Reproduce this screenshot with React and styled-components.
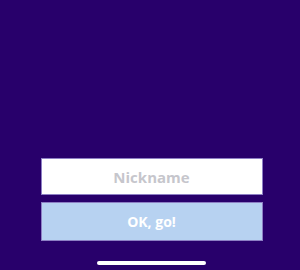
import React from 'react';
import styled, { createGlobalStyle } from 'styled-components';

const GlobalStyle = createGlobalStyle`
  html, body {
    margin: 0;
    padding: 0;
    background: #28006b;
  }
  #root {
    height: 270px;
  }
`;

const Screen = styled.main`
  box-sizing: border-box;
  height: 270px;
  width: 300px;
  padding-left: 3px;
  display: flex;
  flex-direction: column;
  justify-content: flex-end;
  align-items: center;
  background: #28006b;
  font-family: 'Open Sans', 'Liberation Sans', sans-serif;
`;

const Form = styled.form`
  width: 222px;
  display: flex;
  flex-direction: column;
  gap: 7px;
  margin-bottom: 20px;
`;

const Field = styled.input`
  box-sizing: border-box;
  width: 100%;
  height: 37px;
  border: 1px solid #8d7fc4;
  background: #ffffff;
  text-align: center;
  font-family: inherit;
  font-weight: 700;
  font-size: 15px;
  outline: none;
  &::placeholder {
    color: #c6c6cc;
  }
`;

const Submit = styled.button`
  box-sizing: border-box;
  width: 100%;
  height: 39px;
  border: 1px solid #8d7fc4;
  background: #b7d2f1;
  color: #ffffff;
  font-family: inherit;
  font-weight: 700;
  font-size: 14px;
  cursor: pointer;
`;

const HomeBar = styled.div`
  width: 109px;
  height: 4px;
  border-radius: 2px;
  background: #ffffff;
  margin-bottom: 5px;
`;

const App = () => (
  <>
    <GlobalStyle />
    <Screen>
      <Form onSubmit={(e) => e.preventDefault()}>
        <Field placeholder='Nickname' />
        <Submit type='submit'>OK, go!</Submit>
      </Form>
      <HomeBar />
    </Screen>
  </>
);

export default App;
